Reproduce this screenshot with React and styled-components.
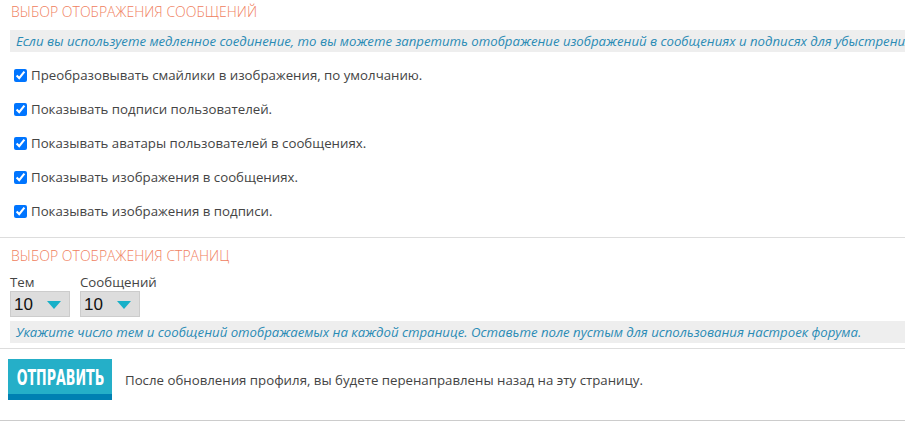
import React from "react";
import styled, { createGlobalStyle } from "styled-components";

const GlobalStyle = createGlobalStyle`
  html, body {
    margin: 0;
    padding: 0;
    background: #ffffff;
    overflow: hidden;
  }
  body {
    font-family: "Open Sans", "Liberation Sans", sans-serif;
    font-size: 13.25px;
    color: #444444;
  }
`;

const Page = styled.div`
  width: 905px;
  overflow: hidden;
`;

const Section = styled.section`
  padding: ${(p) => p.$top || 3}px 0 ${(p) => p.$bottom || 0}px 10px;
  border-bottom: 1px solid #dddddd;
`;

const Heading = styled.h3`
  margin: 0 0 9px 1px;
  font-family: "Open Sans", sans-serif;
  font-weight: 300;
  font-size: 14px;
  line-height: 18px;
  color: #f0805e;
  text-transform: uppercase;
  white-space: nowrap;
`;

const Note = styled.div`
  background: #eeeeee;
  color: #2a8bb5;
  font-style: italic;
  font-size: 13.2px;
  line-height: 22px;
  padding: 0 0 0 6px;
  white-space: nowrap;
  overflow: hidden;
  margin-right: -20px;
`;

const CheckList = styled.div`
  display: flex;
  flex-direction: column;
  gap: 16px;
  padding: 14px 0 17px 0;
`;

const CheckRow = styled.label`
  display: flex;
  align-items: center;
  height: 18px;
  white-space: nowrap;
  color: #444444;

  input {
    margin: 0 4px 0 4px;
    width: 13px;
    height: 13px;
  }
`;

const SelectRow = styled.div`
  display: flex;
  gap: 10px;
  margin-bottom: 4px;
`;

const Field = styled.div`
  display: flex;
  flex-direction: column;
  color: #444444;
  line-height: 17px;
`;

const SelectWrap = styled.div`
  position: relative;
  width: 60px;
  height: 26px;
`;

const Select = styled.select`
  appearance: none;
  -webkit-appearance: none;
  width: 100%;
  height: 100%;
  margin: 0;
  padding: 0 0 0 3px;
  border: 1px solid #cccccc;
  border-radius: 0;
  background: #dddddd;
  font-family: "Liberation Sans", Arial, sans-serif;
  font-size: 17px;
  color: #111111;
  outline: none;
`;

const Arrow = styled.svg`
  position: absolute;
  right: 9px;
  top: 10px;
  pointer-events: none;
`;

const Footer = styled.div`
  display: flex;
  align-items: center;
  gap: 13px;
  padding: 10px 0 20px 8px;
  border-bottom: 1px solid #cccccc;
`;

const SubmitButton = styled.button`
  display: flex;
  justify-content: center;
  align-items: center;
  flex: none;
  width: 104px;
  height: 41px;
  border: 0;
  border-bottom: 6px solid #0080b2;
  background: #25afc8;
  color: #ffffff;
  font-family: "Liberation Sans Narrow", "DejaVu Sans Condensed", sans-serif;
  font-weight: 700;
  font-size: 22px;
  padding: 1px 0 0 0;
  overflow: visible;
  cursor: pointer;

  span {
    flex: none;
    white-space: nowrap;
    transform: scaleX(0.64);
  }
`;

const FooterText = styled.span`
  color: #444444;
  white-space: nowrap;
`;

const checks = [
  "Преобразовывать смайлики в изображения, по умолчанию.",
  "Показывать подписи пользователей.",
  "Показывать аватары пользователей в сообщениях.",
  "Показывать изображения в сообщениях.",
  "Показывать изображения в подписи.",
];

const PerPage = ({ label }) => (
  <Field>
    {label}
    <SelectWrap>
      <Select defaultValue="10">
        <option>5</option>
        <option>10</option>
        <option>20</option>
        <option>50</option>
      </Select>
      <Arrow width="14" height="8" viewBox="0 0 14 8">
        <polygon points="0,0 14,0 7,8" fill="#17b0c8" />
      </Arrow>
    </SelectWrap>
  </Field>
);

export default function App() {
  return (
    <Page>
      <GlobalStyle />
      <Section>
        <Heading>Выбор отображения сообщений</Heading>
        <Note>
          Если вы используете медленное соединение, то вы можете запретить
          отображение изображений в сообщениях и подписях для убыстрения загрузки страниц.
        </Note>
        <CheckList>
          {checks.map((text) => (
            <CheckRow key={text}>
              <input type="checkbox" defaultChecked />
              {text}
            </CheckRow>
          ))}
        </CheckList>
      </Section>
      <Section $top={9} $bottom={5}>
        <Heading>Выбор отображения страниц</Heading>
        <SelectRow>
          <PerPage label="Тем" />
          <PerPage label="Сообщений" />
        </SelectRow>
        <Note>
          Укажите число тем и сообщений отображаемых на каждой странице. Оставьте
          поле пустым для использования настроек форума.
        </Note>
      </Section>
      <Footer>
        <SubmitButton type="button">
          <span>ОТПРАВИТЬ</span>
        </SubmitButton>
        <FooterText>После обновления профиля, вы будете перенаправлены назад на эту страницу.</FooterText>
      </Footer>
    </Page>
  );
}
